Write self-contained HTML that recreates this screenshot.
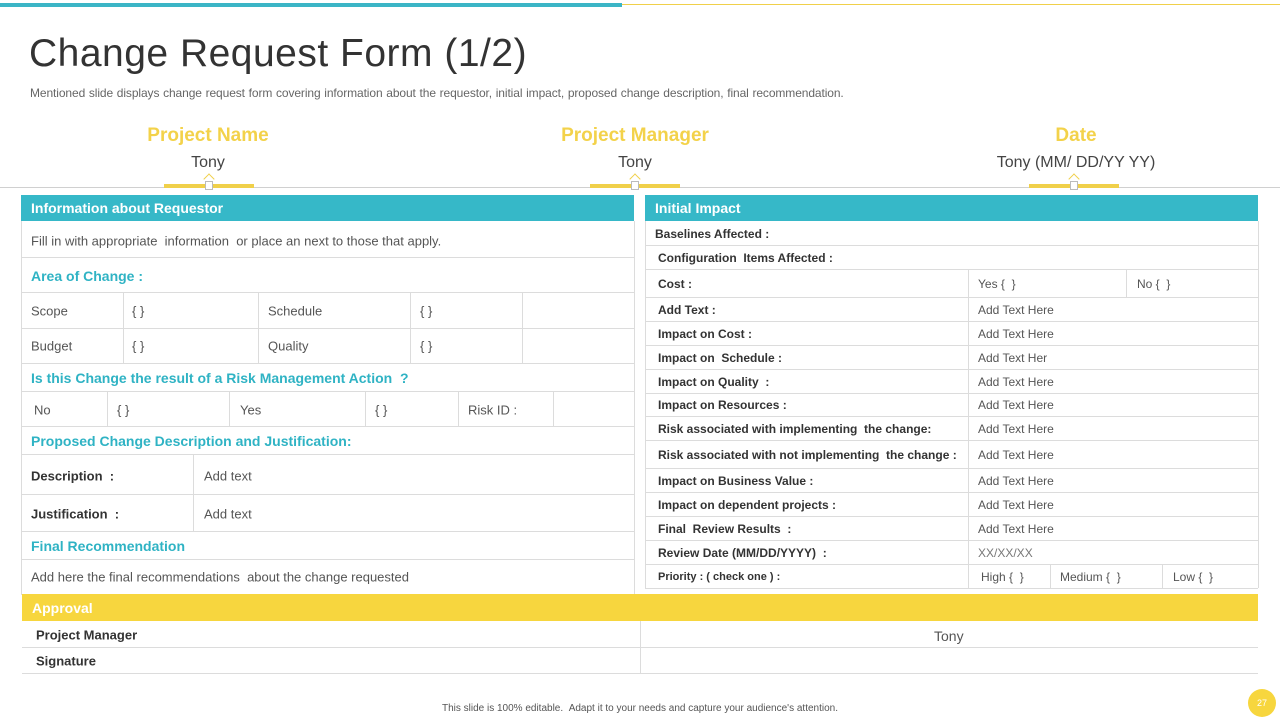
<!DOCTYPE html>
<html><head><meta charset="utf-8"><style>
*{margin:0;padding:0;box-sizing:border-box}
body{width:1280px;height:720px;position:relative;background:#fff;font-family:"Liberation Sans",sans-serif;overflow:hidden;color:#444}
.a{position:absolute;white-space:nowrap}
.h{position:absolute;height:1px;background:#dcdcdc}
.v{position:absolute;width:1px;background:#dcdcdc}
.t{position:absolute;white-space:nowrap;font-size:13px;color:#555;transform:translateY(-50%)}
.b{font-weight:bold;color:#333;font-size:12px}
.c{color:#2fb3c4;font-weight:bold;font-size:14px}
.y{color:#f3d24a;font-weight:bold;font-size:19px;text-align:center;width:300px;transform:none}
.car{position:absolute;width:8px;height:8px;border-left:1.5px solid #f0d04a;border-top:1.5px solid #f0d04a;transform:rotate(45deg)}
</style></head><body>
<div class="a" style="left:0;top:3px;width:622px;height:4px;background:#3bb5c6"></div>
<div class="a" style="left:622px;top:4px;width:658px;height:1px;background:#f0d04a"></div>
<div class="a" style="left:29px;top:32px;font-size:39px;color:#333;letter-spacing:0.5px">Change Request Form (1/2)</div>
<div class="a" style="left:30px;top:86px;font-size:12px;color:#666;letter-spacing:-0.1px;word-spacing:0.5px">Mentioned slide displays change request form covering information about the requestor, initial impact, proposed change description, final recommendation.</div>

<div class="a y" style="left:58px;top:125px">Project Name</div>
<div class="a y" style="left:485px;top:125px">Project Manager</div>
<div class="a y" style="left:926px;top:125px">Date</div>
<div class="a" style="left:58px;top:154px;width:300px;text-align:center;font-size:16px;color:#444">Tony</div>
<div class="a" style="left:485px;top:154px;width:300px;text-align:center;font-size:16px;color:#444">Tony</div>
<div class="a" style="left:926px;top:154px;width:300px;text-align:center;font-size:16px;color:#444">Tony (MM/ DD/YY YY)</div>
<div class="a" style="left:0;top:187px;width:1280px;height:1px;background:#d0d0d0"></div>
<div class="a" style="left:164px;top:184px;width:90px;height:4px;background:#f0d04a"></div>
<div class="a" style="left:590px;top:184px;width:90px;height:4px;background:#f0d04a"></div>
<div class="a" style="left:1029px;top:184px;width:90px;height:4px;background:#f0d04a"></div>
<div class="car" style="left:205px;top:175px"></div>
<div class="car" style="left:631px;top:175px"></div>
<div class="car" style="left:1070px;top:175px"></div>
<div class="a" style="left:205px;top:181px;width:8px;height:9px;background:#fff;border:1px solid #bbb"></div>
<div class="a" style="left:631px;top:181px;width:8px;height:9px;background:#fff;border:1px solid #bbb"></div>
<div class="a" style="left:1070px;top:181px;width:8px;height:9px;background:#fff;border:1px solid #bbb"></div>

<!-- Left panel -->
<div class="a" style="left:21px;top:195px;width:613px;height:26px;background:#36b8c8"></div>
<div class="a" style="left:31px;top:200px;color:#fff;font-weight:bold;font-size:14px">Information about Requestor</div>
<div class="v" style="left:21px;top:221px;height:373px"></div>
<div class="v" style="left:634px;top:221px;height:373px"></div>
<div class="h" style="left:21px;top:257px;width:613px"></div>
<div class="h" style="left:21px;top:292px;width:613px"></div>
<div class="h" style="left:21px;top:328px;width:613px"></div>
<div class="h" style="left:21px;top:363px;width:613px"></div>
<div class="h" style="left:21px;top:391px;width:613px"></div>
<div class="h" style="left:21px;top:426px;width:613px"></div>
<div class="h" style="left:21px;top:454px;width:613px"></div>
<div class="h" style="left:21px;top:494px;width:613px"></div>
<div class="h" style="left:21px;top:531px;width:613px"></div>
<div class="h" style="left:21px;top:559px;width:613px"></div>
<div class="h" style="left:21px;top:594px;width:613px"></div>
<div class="v" style="left:123px;top:292px;height:71px"></div>
<div class="v" style="left:258px;top:292px;height:71px"></div>
<div class="v" style="left:410px;top:292px;height:71px"></div>
<div class="v" style="left:522px;top:292px;height:71px"></div>
<div class="v" style="left:107px;top:391px;height:35px"></div>
<div class="v" style="left:229px;top:391px;height:35px"></div>
<div class="v" style="left:365px;top:391px;height:35px"></div>
<div class="v" style="left:458px;top:391px;height:35px"></div>
<div class="v" style="left:553px;top:391px;height:35px"></div>
<div class="v" style="left:193px;top:454px;height:77px"></div>

<div class="t" style="left:31px;top:241px">Fill in with appropriate &nbsp;information &nbsp;or place an next to those that apply.</div>
<div class="t c" style="left:31px;top:276px">Area of Change :</div>
<div class="t" style="left:31px;top:311px">Scope</div>
<div class="t" style="left:132px;top:311px">{ }</div>
<div class="t" style="left:268px;top:311px">Schedule</div>
<div class="t" style="left:420px;top:311px">{ }</div>
<div class="t" style="left:31px;top:346px">Budget</div>
<div class="t" style="left:132px;top:346px">{ }</div>
<div class="t" style="left:268px;top:346px">Quality</div>
<div class="t" style="left:420px;top:346px">{ }</div>
<div class="t c" style="left:31px;top:378px">Is this Change the result of a Risk Management Action &nbsp;?</div>
<div class="t" style="left:34px;top:410px">No</div>
<div class="t" style="left:117px;top:410px">{ }</div>
<div class="t" style="left:240px;top:410px">Yes</div>
<div class="t" style="left:375px;top:410px">{ }</div>
<div class="t" style="left:468px;top:410px">Risk ID :</div>
<div class="t c" style="left:31px;top:441px">Proposed Change Description and Justification:</div>
<div class="t b" style="left:31px;top:476px;font-size:13px">Description &nbsp;:</div>
<div class="t" style="left:204px;top:476px">Add text</div>
<div class="t b" style="left:31px;top:514px;font-size:13px">Justification &nbsp;:</div>
<div class="t" style="left:204px;top:514px">Add text</div>
<div class="t c" style="left:31px;top:546px">Final Recommendation</div>
<div class="t" style="left:31px;top:577px">Add here the final recommendations &nbsp;about the change requested</div>

<!-- Right panel -->
<div class="a" style="left:645px;top:195px;width:613px;height:26px;background:#36b8c8"></div>
<div class="a" style="left:655px;top:200px;color:#fff;font-weight:bold;font-size:14px">Initial Impact</div>
<div class="v" style="left:645px;top:221px;height:367px"></div>
<div class="v" style="left:1258px;top:221px;height:367px"></div>
<div class="h" style="left:645px;top:245px;width:613px"></div>
<div class="h" style="left:645px;top:269px;width:613px"></div>
<div class="h" style="left:645px;top:297px;width:613px"></div>
<div class="h" style="left:645px;top:321px;width:613px"></div>
<div class="h" style="left:645px;top:345px;width:613px"></div>
<div class="h" style="left:645px;top:369px;width:613px"></div>
<div class="h" style="left:645px;top:393px;width:613px"></div>
<div class="h" style="left:645px;top:416px;width:613px"></div>
<div class="h" style="left:645px;top:440px;width:613px"></div>
<div class="h" style="left:645px;top:468px;width:613px"></div>
<div class="h" style="left:645px;top:492px;width:613px"></div>
<div class="h" style="left:645px;top:516px;width:613px"></div>
<div class="h" style="left:645px;top:540px;width:613px"></div>
<div class="h" style="left:645px;top:564px;width:613px"></div>
<div class="h" style="left:645px;top:588px;width:613px"></div>
<div class="v" style="left:968px;top:269px;height:319px"></div>
<div class="v" style="left:1126px;top:269px;height:28px"></div>
<div class="v" style="left:1050px;top:564px;height:24px"></div>
<div class="v" style="left:1162px;top:564px;height:24px"></div>

<div class="t b" style="left:655px;top:234px">Baselines Affected :</div>
<div class="t b" style="left:658px;top:258px">Configuration &nbsp;Items Affected :</div>
<div class="t b" style="left:658px;top:284px">Cost :</div>
<div class="t" style="left:978px;top:284px;font-size:12px">Yes { &nbsp;}</div>
<div class="t" style="left:1137px;top:284px;font-size:12px">No { &nbsp;}</div>
<div class="t b" style="left:658px;top:310px">Add Text :</div>
<div class="t b" style="left:658px;top:334px">Impact on Cost :</div>
<div class="t b" style="left:658px;top:358px">Impact on &nbsp;Schedule :</div>
<div class="t b" style="left:658px;top:382px">Impact on Quality &nbsp;:</div>
<div class="t b" style="left:658px;top:405px">Impact on Resources :</div>
<div class="t b" style="left:658px;top:429px">Risk associated with implementing &nbsp;the change:</div>
<div class="t b" style="left:658px;top:455px">Risk associated with not implementing &nbsp;the change :</div>
<div class="t b" style="left:658px;top:481px">Impact on Business Value :</div>
<div class="t b" style="left:658px;top:505px">Impact on dependent projects :</div>
<div class="t b" style="left:658px;top:529px">Final &nbsp;Review Results &nbsp;:</div>
<div class="t b" style="left:658px;top:553px">Review Date (MM/DD/YYYY) &nbsp;:</div>
<div class="t b" style="left:658px;top:577px;font-size:11px">Priority : ( check one ) :</div>
<div class="t" style="left:978px;top:310px;font-size:12px">Add Text Here</div>
<div class="t" style="left:978px;top:334px;font-size:12px">Add Text Here</div>
<div class="t" style="left:978px;top:358px;font-size:12px">Add Text Her</div>
<div class="t" style="left:978px;top:382px;font-size:12px">Add Text Here</div>
<div class="t" style="left:978px;top:405px;font-size:12px">Add Text Here</div>
<div class="t" style="left:978px;top:429px;font-size:12px">Add Text Here</div>
<div class="t" style="left:978px;top:455px;font-size:12px">Add Text Here</div>
<div class="t" style="left:978px;top:481px;font-size:12px">Add Text Here</div>
<div class="t" style="left:978px;top:505px;font-size:12px">Add Text Here</div>
<div class="t" style="left:978px;top:529px;font-size:12px">Add Text Here</div>
<div class="t" style="left:978px;top:553px;font-size:12px;color:#777">XX/XX/XX</div>
<div class="t" style="left:981px;top:577px;font-size:12px">High { &nbsp;}</div>
<div class="t" style="left:1060px;top:577px;font-size:12px">Medium { &nbsp;}</div>
<div class="t" style="left:1173px;top:577px;font-size:12px">Low { &nbsp;}</div>

<!-- Approval -->
<div class="a" style="left:22px;top:594px;width:1236px;height:27px;background:#f7d63e"></div>
<div class="a" style="left:32px;top:600px;color:#fff;font-weight:bold;font-size:14px">Approval</div>
<div class="h" style="left:22px;top:647px;width:1236px"></div>
<div class="h" style="left:22px;top:673px;width:1236px"></div>
<div class="v" style="left:640px;top:621px;height:52px"></div>
<div class="t b" style="left:36px;top:635px;font-size:13px">Project Manager</div>
<div class="t b" style="left:36px;top:661px;font-size:13px">Signature</div>
<div class="t" style="left:934px;top:636px;font-size:14px">Tony</div>

<div class="a" style="left:0;top:703px;width:1280px;text-align:center;font-size:10px;color:#555">This slide is 100% editable. &nbsp;Adapt it to your needs and capture your audience's attention.</div>
<div class="a" style="left:1248px;top:689px;width:28px;height:28px;border-radius:50%;background:#f7d63e;color:#fff;font-size:9px;text-align:center;line-height:28px">27</div>
</body></html>
